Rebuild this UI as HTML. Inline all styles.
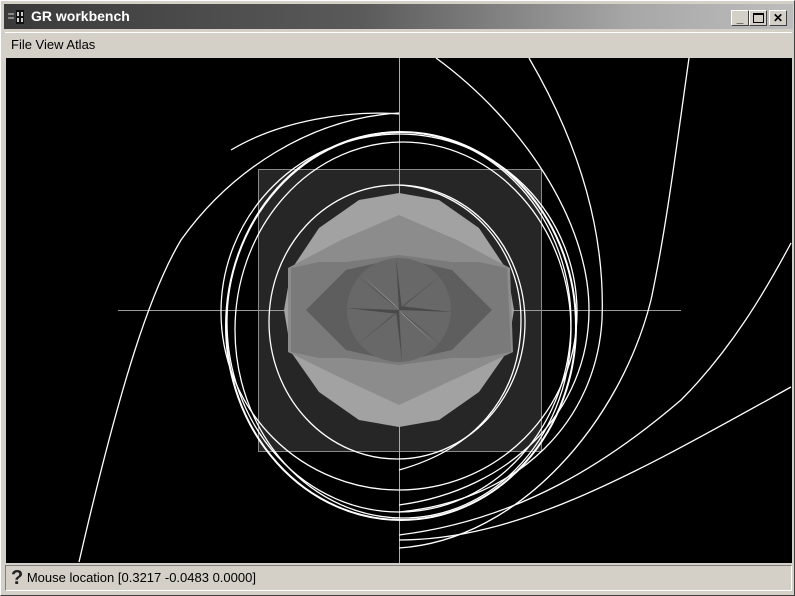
<!DOCTYPE html>
<html><head><meta charset="utf-8"><style>
html,body{margin:0;padding:0;width:795px;height:596px;overflow:hidden;background:#d4d0c8;font-family:"Liberation Sans",sans-serif}
.win{position:absolute;left:0;top:0;width:793px;height:594px;border:1px solid #fff;border-right-color:#404040;border-bottom-color:#404040;background:#d4d0c8}
.title{position:absolute;left:3px;top:3px;width:789px;height:25px;background:linear-gradient(90deg,#3a3a3a 0%,#5a5a5a 45%,#a8a8a8 80%,#bdbdbd 100%)}
.title span{position:absolute;left:27px;top:4px;color:#fff;font-weight:bold;font-size:14px}
.btn{position:absolute;top:6px;width:16px;height:14px;background:#d4d0c8;border:1px solid #fff;border-right-color:#404040;border-bottom-color:#404040;font-size:12px;line-height:14px;text-align:center;color:#000;font-weight:bold}
.menu{position:absolute;left:4px;top:31px;width:787px;height:24px;font-size:13px;line-height:24px;border-top:1px solid #fff}
.menu span{margin-left:6px}
.status{position:absolute;left:4px;top:564px;width:785px;height:24px;border:1px solid #fff;border-top-color:#808080;border-left-color:#808080;font-size:13px;line-height:24px}
</style></head><body>
<div class="win">
<div class="title">
<svg width="20" height="16" style="position:absolute;left:4px;top:5px"><rect x="0" y="4" width="6" height="2" fill="#888"/><rect x="0" y="8" width="6" height="2" fill="#888"/><rect x="8" y="1" width="8" height="14" fill="#111"/><rect x="9" y="3" width="2" height="4" fill="#ccc"/><rect x="13" y="3" width="2" height="4" fill="#ccc"/><rect x="9" y="9" width="2" height="4" fill="#ccc"/><rect x="13" y="9" width="2" height="4" fill="#ccc"/></svg>
<span>GR workbench</span>
<div class="btn" style="left:727px">_</div>
<div class="btn" style="left:745px"><div style="width:9px;height:7px;border:1px solid #000;border-top-width:2px;margin:2px auto"></div></div>
<div class="btn" style="left:765px">✕</div>
</div>
<div class="menu"><span>File View Atlas</span></div>
<svg style="position:absolute;left:5px;top:57px" width="786" height="505" viewBox="5 58 786 505">
<rect x="5" y="58" width="786" height="505" fill="#000"/>
<rect x="257.5" y="169.5" width="283" height="282" fill="#262626" stroke="#8a8a8a"/>
<line x1="398.5" y1="58" x2="398.5" y2="563" stroke="#aaa"/>
<line x1="117" y1="310.5" x2="680" y2="310.5" stroke="#999"/>
<g>
<path d="M290 270 L318 228 L358 200 L398 193 L438 200 L478 228 L506 270 L513 310 L506 352 L478 392 L438 420 L398 427 L358 420 L318 392 L290 352 L283 310Z" fill="#a2a2a2"/>
<path d="M287 268 L340 240 L398 215 L456 240 L509 268 L512 352 L456 378 L398 405 L340 378 L287 352Z" fill="#8c8c8c"/>
<path d="M290 268 L318 262 L345 262 L398 255 L451 262 L478 262 L506 268 L510 352 L478 358 L451 358 L398 365 L345 358 L318 358 L290 352Z" fill="#7a7a7a"/>
<path d="M305 310 L345 270 L398 258 L451 270 L491 310 L451 350 L398 362 L345 350Z" fill="#5e5e5e"/>
<circle cx="398" cy="310" r="52" fill="#686868"/>
<g fill="#4a4a4a"><path d="M398 310L352 272L392 304Z"/><path d="M398 310L444 348L404 316Z"/><path d="M398 310L444 272L404 304Z"/><path d="M398 310L352 348L392 316Z"/><path d="M398 310L345 308L398 314Z"/><path d="M398 310L451 312L398 306Z"/><path d="M398 310L395 258L401 310Z"/><path d="M398 310L401 362L395 310Z"/></g>
<g fill="#9a9a9a"><path d="M398 310L362 276L394 305Z"/><path d="M398 310L434 344L402 315Z"/></g>
</g>
<g fill="none" stroke="#fff" stroke-width="1.3">
<ellipse cx="398" cy="312" rx="178" ry="178"/>
<ellipse cx="398" cy="322" rx="172" ry="190"/>
<ellipse cx="400" cy="326" rx="175" ry="194" stroke-width="2"/>
<ellipse cx="402" cy="330" rx="168" ry="188"/>
<ellipse cx="396" cy="322" rx="128" ry="137"/>
<path d="M230 150 C280 120 350 110 398 114"/>
<path d="M398 113 C310 118 230 170 180 240 C150 290 120 380 78 562"/>
<path d="M398 548 C520 540 620 420 650 300 C665 230 675 150 688 58"/>
<path d="M398 535 C520 520 610 460 680 400 C730 350 765 290 790 243"/>
<path d="M398 540 C520 540 640 470 790 387"/>
<path d="M398 512 C520 500 595 420 601 320 C605 220 570 130 528 58"/>
<path d="M398 505 C510 490 588 410 588 310 C588 220 520 120 435 58"/>
<path d="M398 185 C470 190 520 250 520 320 C520 400 470 450 398 470"/>
</g>
</svg>
<div class="status"><span style="font-size:20px;font-weight:bold;margin-left:5px;color:#222;vertical-align:-2px">?</span> Mouse location [0.3217 -0.0483 0.0000]</div>
</div>
</body></html>
